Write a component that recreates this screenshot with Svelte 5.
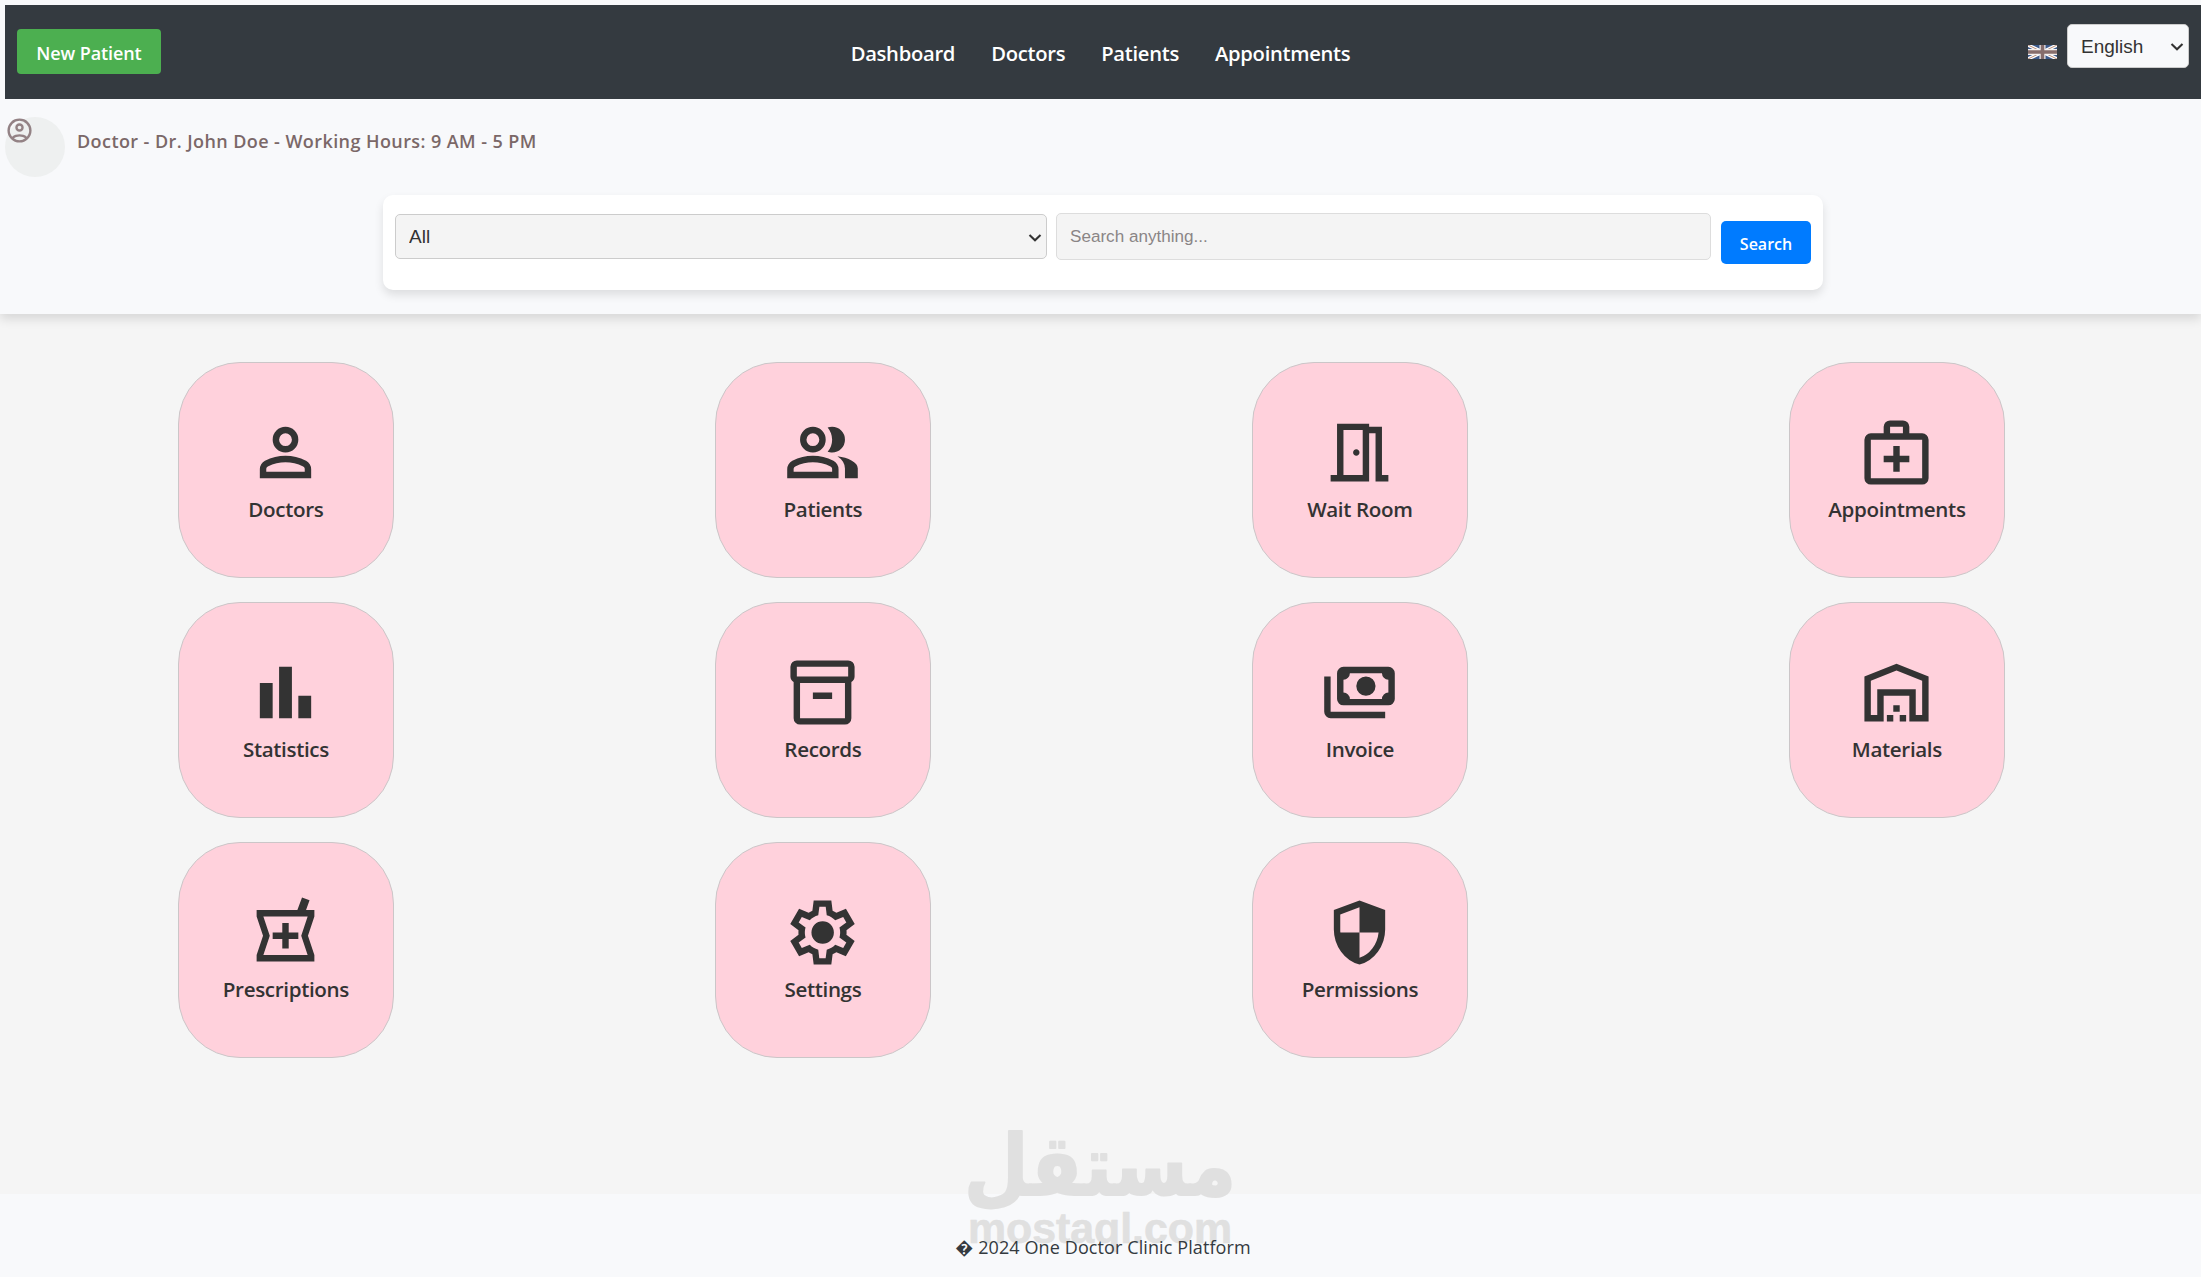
<script>
  const links = ['Dashboard', 'Doctors', 'Patients', 'Appointments'];

  const cards = [
    { label: 'Doctors', icon: 'M480-480q-66 0-113-47t-47-113q0-66 47-113t113-47q66 0 113 47t47 113q0 66-47 113t-113 47ZM160-160v-112q0-34 17.5-62.5T224-378q62-31 126-46.5T480-440q66 0 130 15.5T736-378q29 15 46.5 43.5T800-272v112H160Zm80-80h480v-32q0-11-5.5-20T700-306q-54-27-109-40.5T480-360q-56 0-111 13.5T260-306q-9 5-14.5 14t-5.5 20v32Zm240-320q33 0 56.5-23.5T560-640q0-33-23.5-56.5T480-720q-33 0-56.5 23.5T400-640q0 33 23.5 56.5T480-560Z' },
    { label: 'Patients', icon: 'M40-160v-112q0-34 17.5-62.5T104-378q62-31 126-46.5T360-440q66 0 130 15.5T616-378q29 15 46.5 43.5T680-272v112H40Zm720 0v-120q0-44-24.5-84.5T666-434q51 6 96 20.5t84 35.5q36 20 55 44.5t19 53.5v120H760ZM360-480q-66 0-113-47t-47-113q0-66 47-113t113-47q66 0 113 47t47 113q0 66-47 113t-113 47Zm400-160q0 66-47 113t-113 47q-11 0-28-2.5t-28-5.5q27-32 41.5-71t14.5-81q0-42-14.5-81T544-792q14-5 28-6.5t28-1.5q66 0 113 47t47 113ZM120-240h480v-32q0-11-5.5-20T580-306q-54-27-109-40.5T360-360q-56 0-111 13.5T140-306q-9 5-14.5 14t-5.5 20v32Zm240-320q33 0 56.5-23.5T440-640q0-33-23.5-56.5T360-720q-33 0-56.5 23.5T280-640q0 33 23.5 56.5T360-560Z' },
    { label: 'Wait Room', icon: 'M120-120v-80h80v-640h400v40h160v600h80v80H680v-600h-80v600H120ZM280-200h240v-560H280v560ZM440-440q-17 0-28.5-11.5T400-480q0-17 11.5-28.5T440-520q17 0 28.5 11.5T480-480q0 17-11.5 28.5T440-440Z' },
    { label: 'Appointments', icon: 'M440-240v-120H320v-80h120v-120h80v120h120v80H520v120ZM160-80q-33 0-56.5-23.5T80-160v-480q0-33 23.5-56.5T160-720h160v-80q0-33 23.5-56.5T400-880h160q33 0 56.5 23.5T640-800v80h160q33 0 56.5 23.5T880-640v480q0 33-23.5 56.5T800-80H160Zm0-80h640v-480H160v480Zm240-560h160v-80H400v80Z' },
    { label: 'Statistics', icon: 'M160-160v-440h160v440H160Zm240 0v-640h160v640H400Zm240 0v-280h160v280H640Z' },
    { label: 'Records', icon: 'M200-80q-33 0-56.5-23.5T120-160v-451q-18-11-29-28.5T80-680v-120q0-33 23.5-56.5T160-880h640q33 0 56.5 23.5T880-800v120q0 23-11 40.5T840-611v451q0 33-23.5 56.5T760-80H200Zm0-520v440h560v-440H200Zm-40-80h640v-120H160v120Zm200 280h240v-80H360v80Z' },
    { label: 'Invoice', icon: 'M560-440q-50 0-85-35t-35-85q0-50 35-85t85-35q50 0 85 35t35 85q0 50-35 85t-85 35ZM280-320q-33 0-56.5-23.5T200-400v-320q0-33 23.5-56.5T280-800h560q33 0 56.5 23.5T920-720v320q0 33-23.5 56.5T840-320H280Zm80-80h400q0-33 23.5-56.5T840-480v-160q-33 0-56.5-23.5T760-720H360q0 33-23.5 56.5T280-640v160q33 0 56.5 23.5T360-400Zm440 240H120q-33 0-56.5-23.5T40-240v-440h80v440h680v80Z' },
    { label: 'Materials', icon: 'M160-200h80v-320h480v320h80v-426L480-754 160-626v426Zm-80 80v-560l400-160 400 160v560H640v-320H320v320H80Zm280 0v-80h80v80h-80Zm80-120v-80h80v80h-80Zm80 120v-80h80v80h-80Z' },
    { label: 'Prescriptions', icon: 'M120-120v-80l80-240-80-240v-80h508l58-156 94 35-44 121h104v80l-80 240 80 240v80H120Zm320-160h80v-120h120v-80H520v-120h-80v120H320v80h120v120ZM204-200h552l-80-240 80-240H204l80 240-80 240Z' },
    { label: 'Settings', icon: 'M370-80l-16-128q-13-5-24.5-12T307-235l-119 50L78-375l103-78q-1-7-1-13.5v-27q0-6.5 1-13.5L78-585l110-190 119 50q11-8 23-15t24-12l16-128h220l16 128q13 5 24.5 12t22.5 15l119-50 110 190-103 78q1 7 1 13.5v27q0 6.5-2 13.5l103 78-110 190-118-50q-11 8-23 15t-24 12L590-80H370Zm70-80h79l14-106q31-8 57.5-23.5T639-327l99 41 39-68-86-65q5-14 7-29.5t2-31.5q0-16-2-31.5t-7-29.5l86-65-39-68-99 42q-22-23-48.5-38.5T533-694l-13-106h-79l-14 106q-31 8-57.5 23.5T321-633l-99-41-39 68 86 64q-5 15-7 30t-2 32q0 16 2 31t7 30l-86 65 39 68 99-42q22 23 48.5 38.5T427-266l13 106Zm42-180q58 0 99-41t41-99q0-58-41-99t-99-41q-59 0-99.5 41T342-480q0 58 40.5 99t99.5 41Z' },
    { label: 'Permissions', icon: 'M480-80q-139-35-229.5-159.5T160-516v-244l320-120 320 120v244q0 152-90.5 276.5T480-80Zm0-84q97-30 162-118.5T718-480H480v-315l-240 90v207q0 7 2 18h238v316Z' }
  ];
</script>

{#snippet chevron()}
  <svg class="chevron" viewBox="0 0 14 10" aria-hidden="true"><path d="M1.500 2 7 7.200l5.500-5.200" /></svg>
{/snippet}

<div class="page">
  <header class="top">
    <nav class="bar">
      <button class="new-patient">New Patient</button>
      <ul class="links">
        {#each links as link}<li><a href="#top">{link}</a></li>{/each}
      </ul>
      <div class="language">
        <svg class="flag" viewBox="0 0 29 14" aria-hidden="true">
          <rect width="29" height="14" fill="#3c5a8c" />
          <path d="M0 0l29 14M29 0L0 14" stroke="#fff" stroke-width="3.400" />
          <path d="M0 0l29 14M29 0L0 14" stroke="#b98d78" stroke-width="1" />
          <path d="M14.500 0v14M0 7h29" stroke="#f4f0ef" stroke-width="6" />
          <path d="M14.500 0v14M0 7h29" stroke="#866d6c" stroke-width="3.600" />
        </svg>
        <div class="select lang-select">
          <select aria-label="Language"><option>English</option></select>
          {@render chevron()}
        </div>
      </div>
    </nav>

    <div class="doctor">
      <div class="avatar">
        <svg viewBox="0 -960 960 960" aria-hidden="true"><path d="M234-276q51-39 114-61.500T480-360q69 0 132 22.500T726-276q35-41 54.500-93T800-480q0-133-93.500-226.500T480-800q-133 0-226.500 93.500T160-480q0 59 19.500 111t54.500 93Zm246-164q-59 0-99.500-40.500T340-580q0-59 40.500-99.500T480-720q59 0 99.500 40.500T620-580q0 59-40.500 99.500T480-440Zm0 360q-83 0-156-31.500T197-197q-54-54-85.500-127T80-480q0-83 31.500-156T197-763q54-54 127-85.500T480-880q83 0 156 31.500T763-763q54 54 85.500 127T880-480q0 83-31.500 156T763-197q-54 54-127 85.500T480-80Zm0-80q53 0 100-15.500t86-44.500q-39-29-86-44.500T480-280q-53 0-100 15.500T294-220q39 29 86 44.500T480-160Zm0-360q26 0 43-17t17-43q0-26-17-43t-43-17q-26 0-43 17t-17 43q0 26 17 43t43 17Z" /></svg>
      </div>
      <p>Doctor - Dr. John Doe - Working Hours: 9 AM - 5 PM</p>
    </div>

    <form class="search">
      <div class="select scope">
        <select aria-label="Search in"><option>All</option></select>
        {@render chevron()}
      </div>
      <input type="text" placeholder="Search anything..." />
      <button type="button">Search</button>
    </form>
  </header>

  <main class="grid">
    {#each cards as card}
      <a class="card" href="#top">
        <svg viewBox="0 -960 960 960" aria-hidden="true"><path fill-rule="evenodd" d={card.icon} /></svg>
        <span>{card.label}</span>
      </a>
    {/each}
  </main>

  <footer>
    <svg class="watermark" viewBox="0 0 270 130" aria-hidden="true">
      <text class="wm-ar" x="135" y="69" text-anchor="middle" textLength="272" lengthAdjust="spacingAndGlyphs">مستقل</text>
      <text class="wm-en" x="3" y="117" textLength="264" lengthAdjust="spacingAndGlyphs">mostaql.com</text>
    </svg>
    <p>� 2024 One Doctor Clinic Platform</p>
  </footer>
</div>

<style>
  :global(body) {
    background: #f5f5f5;
    font-family: 'Open Sans', 'Noto Sans', sans-serif;
    color: #333;
  }
  .page {
    display: flex;
    flex-direction: column;
    height: 1277px;
    overflow: hidden;
  }
  p, ul { margin: 0; padding: 0; }
  a { color: inherit; text-decoration: none; }
  button { border: 0; color: #fff; font: inherit; font-weight: 600; padding: 0; }

  .top {
    box-sizing: border-box;
    flex: none;
    height: 314px;
    padding: 5px 0 0 5px;
    background: #f8f9fb;
    box-shadow: 0 5px 10px rgba(0, 0, 0, 0.12);
  }
  .bar {
    display: grid;
    grid-template-columns: 1fr auto 1fr;
    box-sizing: border-box;
    height: 94px;
    padding: 0 12px;
    background: #343a40;
  }
  .new-patient {
    width: 144px;
    height: 45px;
    margin-top: 24px;
    border-radius: 4px;
    background: #4caf50;
    font-size: 18px;
    letter-spacing: -0.1px;
    padding-top: 2px;
  }
  .links {
    display: flex;
    gap: 36px;
    padding: 34px 5px 0 0;
    list-style: none;
    color: #fff;
    font-size: 20.2px;
    font-weight: 600;
    line-height: 28px;
    letter-spacing: -0.28px;
  }
  .language {
    display: flex;
    justify-content: flex-end;
    gap: 10px;
    padding-top: 19px;
  }
  .flag { width: 29px; height: 14px; margin-top: 21px; }

  .select { display: grid; }
  .select > :global(*) { grid-area: 1 / 1; }
  .select select {
    appearance: none;
    box-sizing: border-box;
    width: 100%;
    height: 100%;
    border: 1px solid #ccc;
    border-radius: 5px;
    color: #333;
    font: 19px 'Liberation Sans', Arial, sans-serif;
    padding: 0 13px;
  }
  .lang-select { width: 122px; height: 44px; }
  .lang-select select { background: #f8f9fb; }
  .chevron {
    width: 14px;
    height: 10px;
    place-self: center end;
    margin: 2px 5px 0 0;
    fill: none;
    stroke: #333;
    stroke-width: 2.1;
    pointer-events: none;
  }

  .doctor {
    display: flex;
    gap: 12px;
    height: 60px;
    padding-top: 18px;
    color: #7b6868;
    font-size: 18px;
    font-weight: 600;
    line-height: 25px;
  }
  .doctor p { padding-top: 12px; letter-spacing: 0.42px; }
  .avatar {
    position: relative;
    width: 60px;
    height: 60px;
    border-radius: 50%;
    background: #eef0f0;
  }
  .avatar svg {
    position: absolute;
    left: 0;
    top: -1px;
    width: 29px;
    height: 29px;
    fill: #938285;
  }

  .search {
    display: flex;
    align-items: flex-start;
    box-sizing: border-box;
    width: 1440px;
    height: 95px;
    margin: 18px 0 0 378px;
    padding: 18px 12px;
    border-radius: 10px;
    background: #fff;
    box-shadow: 0 5px 10px rgba(0, 0, 0, 0.11);
  }
  .scope { width: 652px; height: 45px; margin: 1px 9px 0 0; }
  .scope select { background: #f4f4f4; }
  .search input {
    box-sizing: border-box;
    width: 655px;
    height: 47px;
    margin-right: 10px;
    border: 1px solid #ddd;
    border-radius: 5px;
    background: #f4f4f4;
    padding: 0 13px;
    font: 17.1px 'Liberation Sans', Arial, sans-serif;
  }
  .search input::placeholder { color: #8a8586; }
  .search button {
    width: 90px;
    height: 43px;
    margin-top: 8px;
    padding-top: 2px;
    border-radius: 5px;
    background: #007bff;
    font-size: 16px;
  }

  .grid {
    display: grid;
    grid-template-columns: repeat(4, 513px);
    grid-auto-rows: 216px;
    gap: 24px;
    justify-items: center;
    flex: 1;
    padding: 48px 0 0 29.4px;
    align-content: start;
  }
  .card {
    display: flex;
    flex-direction: column;
    align-items: center;
    box-sizing: border-box;
    width: 216px;
    padding-top: 51px;
    border: 1px solid #cbc6c8;
    border-radius: 62px;
    background: #ffd1dc;
    font-size: 20.6px;
    font-weight: 600;
    line-height: 30px;
  }
  .card svg { width: 77px; height: 77px; fill: #333; }
  .card span { margin-top: 3px; letter-spacing: -0.35px; }

  footer {
    position: relative;
    flex: none;
    height: 83px;
    background: #f8f9fb;
    text-align: center;
    font-size: 18px;
    line-height: 26px;
  }
  footer p {
    position: relative;
    padding: 40px 0 0 5px;
    color: #343a40;
    letter-spacing: 0.1px;
  }
  .watermark {
    position: absolute;
    left: 965px;
    top: -68px;
    width: 270px;
    height: 130px;
    overflow: visible;
    fill: #e0e0e0;
    stroke: #e0e0e0;
    stroke-linejoin: round;
  }
  .wm-ar { font: bold 84px 'DejaVu Sans', sans-serif; stroke-width: 2px; }
  .wm-en { font: bold 42px 'Liberation Sans', Arial, sans-serif; stroke-width: 0.6px; }
</style>
